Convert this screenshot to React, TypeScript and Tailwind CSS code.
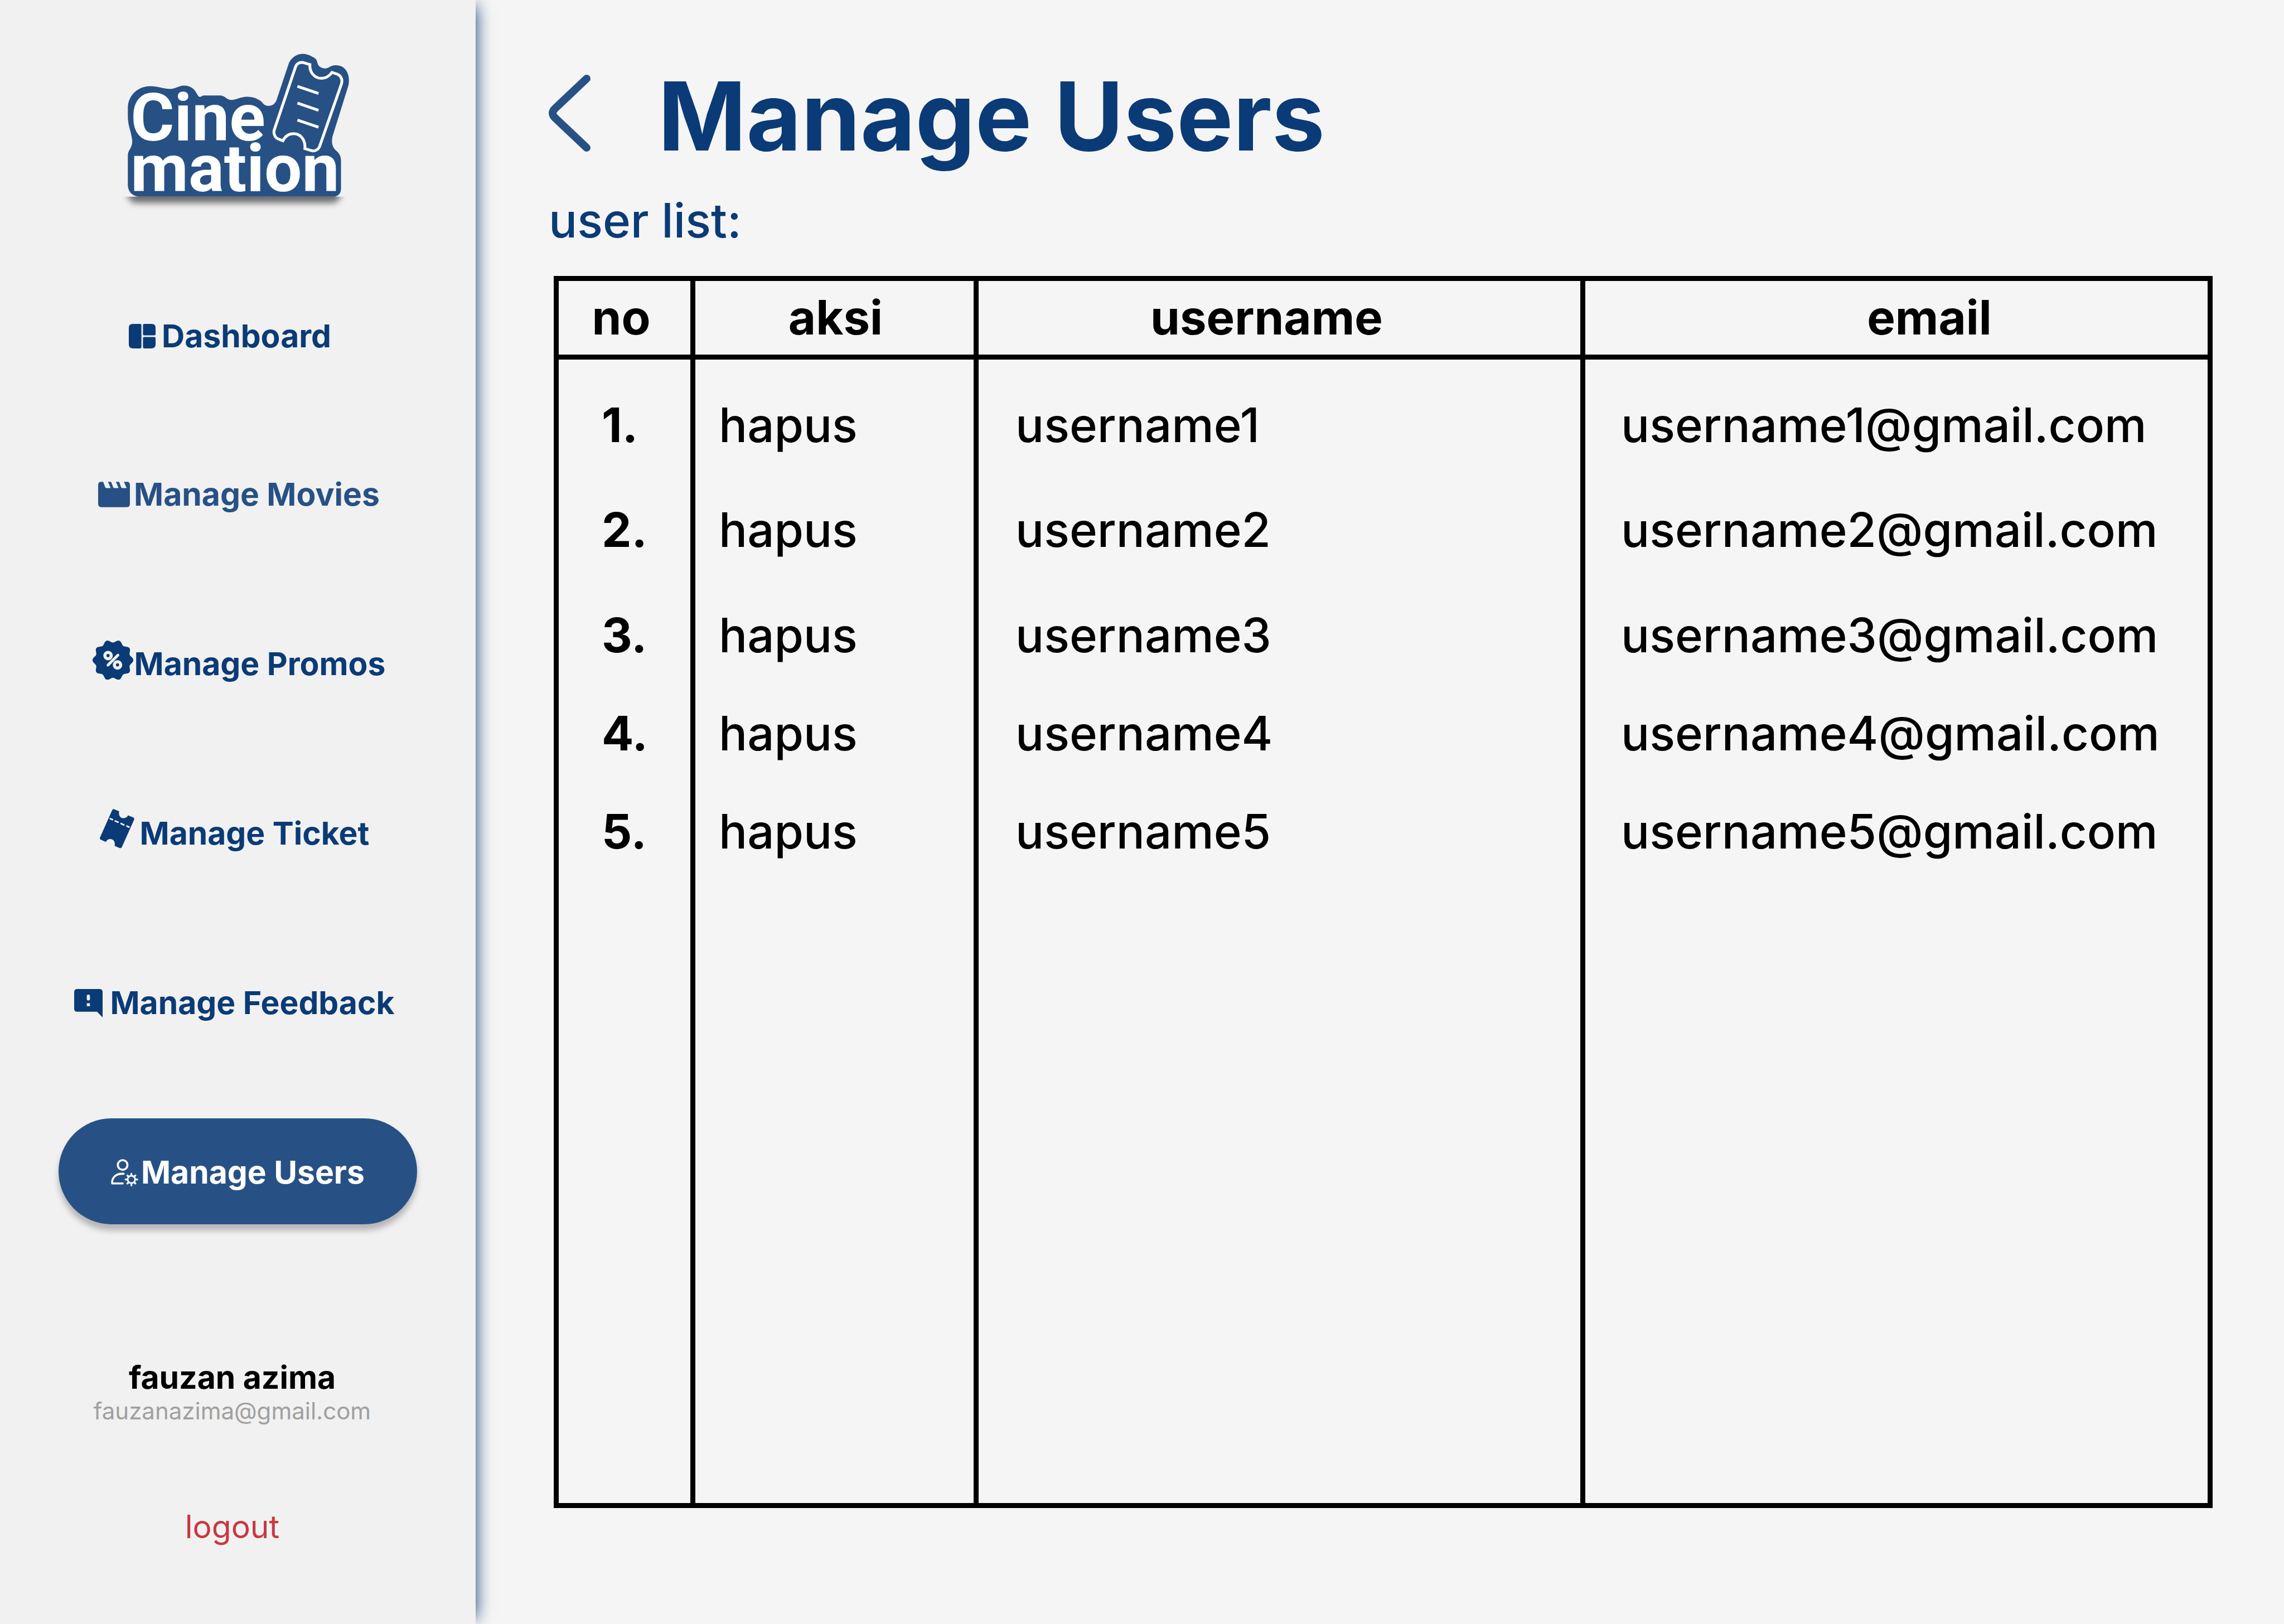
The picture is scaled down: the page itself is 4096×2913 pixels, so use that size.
import type { ReactNode } from "react";

/* ---------- icons ---------- */

function DashboardIcon() {
  return (
    <svg viewBox="0 0 68 62" className="h-[44px] w-[48px]" fill="currentColor" aria-hidden="true">
      <path d="M10 0H29Q32 0 32 3V59Q32 62 29 62H10Q0 62 0 52V10Q0 0 10 0Z" />
      <path d="M39 0H58Q68 0 68 10V26Q68 29 65 29H39Q36 29 36 26V3Q36 0 39 0Z" />
      <path d="M39 33H65Q68 33 68 36V52Q68 62 58 62H39Q36 62 36 59V36Q36 33 39 33Z" />
    </svg>
  );
}

function MovieIcon() {
  return (
    <svg viewBox="0 0 80 64" className="h-[46px] w-[57px]" fill="currentColor" aria-hidden="true">
      <path d="M8 0H12.6L18 14Q19 16 21 16H31.6L24.7 0H32.6L38 14Q39 16 41 16H51.6L44.7 0H52.8L58 14Q59 16 61 16H71.8L64.9 0H74Q80 1 80 8V56Q80 64 72 64H8Q0 64 0 56V8Q0 0 8 0Z" />
    </svg>
  );
}

const badgePath =
  Array.from({ length: 120 }, (_, i) => {
    const angle = (i / 120) * Math.PI * 2;
    const radius = 145 + 11 * Math.cos(angle * 10);
    const x = (191 + radius * Math.cos(angle)).toFixed(1);
    const y = (195 + radius * Math.sin(angle)).toFixed(1);
    return `${i === 0 ? "M" : "L"}${x} ${y}`;
  }).join("") + "Z";

function PromoIcon() {
  return (
    <svg viewBox="36 47 310 354" className="h-[84px] w-[73px]" aria-hidden="true">
      <path d={badgePath} fill="currentColor" />
      <g fill="none" stroke="#f1f1f1">
        <circle cx="154" cy="160" r="24" strokeWidth="24" />
        <circle cx="226" cy="231" r="24" strokeWidth="24" />
        <path d="M153 233L229 157" strokeWidth="21" strokeLinecap="round" />
      </g>
    </svg>
  );
}

function TicketIcon() {
  return (
    <svg viewBox="57 33 262 370" className="h-[88px] w-[62px]" aria-hidden="true">
      <path
        fill="currentColor"
        d="M165 34L204 50C196 78 212 102 236 102C252 102 264 95 271 81L310 97Q321 102 317 113L224 322Q219 332 208 329L169 312C176 284 162 260 136 260C122 260 110 267 102 282L64 265Q55 260 58 250L151 41Q156 31 165 34Z"
      />
      <path
        d="M136 106L153 113M174 124L195 132M218 143L239 153M262 162L278 169"
        stroke="#f1f1f1"
        strokeWidth="12"
        strokeLinecap="round"
      />
    </svg>
  );
}

function FeedbackIcon() {
  return (
    <svg viewBox="0 0 72 72" className="h-[51px] w-[51px]" fill="currentColor" aria-hidden="true">
      <path d="M8 0H64Q72 0 72 8V72L58 57.5H8Q0 57.5 0 50V8Q0 0 8 0Z" />
      <rect x="32" y="14" width="8" height="15" rx="4" fill="#f1f1f1" />
      <rect x="32" y="36" width="8" height="7.5" fill="#f1f1f1" />
    </svg>
  );
}

function UserCogIcon() {
  return (
    <svg
      viewBox="29 43 206 206"
      className="h-[49px] w-[49px]"
      fill="none"
      stroke="currentColor"
      strokeWidth="15"
      strokeLinecap="round"
      strokeLinejoin="round"
      aria-hidden="true"
    >
      <circle cx="117" cy="88" r="36.5" />
      <path d="M125 154H112C65 154 38 185 38 217V227H118" />
      <circle cx="183" cy="197" r="28" strokeWidth="12" />
      <path
        strokeWidth="14"
        d="M183 163V154M183 231V242M149 197H140M217 197H227M159 173L153 167M207 173L213 167M159 221L153 227M207 221L213 227"
      />
    </svg>
  );
}

function BackIcon() {
  return (
    <svg viewBox="0 0 76 148" className="h-[148px] w-[76px]" aria-hidden="true">
      <path
        d="M68 7L11 61Q3 69 11 77L68 131"
        fill="none"
        stroke="currentColor"
        strokeWidth="14"
        strokeLinecap="round"
      />
    </svg>
  );
}

function Logo() {
  return (
    <svg
      viewBox="300 120 600 420"
      className="h-[299px] w-[427px]"
      role="img"
      aria-label="Cinemation"
    >
      <defs>
        <filter id="logo-blur" x="-20%" y="-50%" width="140%" height="200%">
          <feGaussianBlur stdDeviation="8" />
        </filter>
        <clipPath id="below-logo">
          <rect x="300" y="496" width="600" height="44" />
        </clipPath>
      </defs>
      <g clipPath="url(#below-logo)">
        <rect x="323" y="440" width="536" height="72" rx="22" fill="#000" fillOpacity="0.55" filter="url(#logo-blur)" />
      </g>
      <g transform="translate(280 100) scale(0.40816 0.33333)">
        <path
          fill="#275185"
          d="M105 1105V880C105 855 112 840 120 825C131 800 132 785 132 765C130 735 122 700 118 680C108 640 105 610 105 570V520C105 425 165 353 245 353C285 353 330 374 365 374C405 374 415 349 452 349C490 349 515 375 525 398L541 430Q550 439 560 430Q565 424 572 423H670C710 423 710 457 746 457C775 457 800 433 842 433C880 433 910 450 930 470C940 485 950 502 975 502C1005 502 1020 475 1026 448L1096 190C1106 145 1145 108 1184 108C1215 108 1235 125 1254 137C1285 160 1265 190 1298 212C1315 222 1330 220 1347 210C1365 195 1385 190 1410 198C1450 208 1472 260 1470 315Q1470 335 1465 355L1368 735C1362 775 1365 810 1390 840C1410 858 1421 885 1421 915V1130Q1421 1175 1383 1188H168Q110 1175 105 1105Z"
        />
        <g fill="none" stroke="#fff" strokeWidth="5">
          <path
            vectorEffect="non-scaling-stroke"
            d="M1140 208C1148 182 1165 170 1190 175L1229 190C1226 245 1255 293 1300 294C1330 294 1350 275 1365 249L1398 262C1420 275 1432 300 1424 335L1290 805C1283 830 1265 845 1243 842L1198 825C1202 780 1185 713 1128 712C1098 712 1075 735 1062 766L1030 750C1012 740 1004 710 1008 688Z"
          />
          <path
            vectorEffect="non-scaling-stroke"
            d="M1152 354L1282 408M1152 481L1282 536M1152 609L1282 663"
          />
        </g>
      </g>
      <g fill="#fff" fontFamily="Roboto, sans-serif" fontWeight="700" fontSize="168">
        <text x="330" y="355">Cine</text>
        <text x="330" y="482">mation</text>
      </g>
    </svg>
  );
}

/* ---------- sidebar ---------- */

type NavItem = { label: string; icon: ReactNode; className: string };

const navItems: NavItem[] = [
  { label: "Dashboard", icon: <DashboardIcon />, className: "-mb-5 gap-[11px] pr-7 text-[#0a3b76]" },
  { label: "Manage Movies", icon: <MovieIcon />, className: "gap-[7px] pl-1 text-[#275185]" },
  { label: "Manage Promos", icon: <PromoIcon />, className: "gap-[2px] pl-1 text-[#0a3b76]" },
  { label: "Manage Ticket", icon: <TicketIcon />, className: "gap-[10px] pr-3 text-[#0a3b76]" },
  { label: "Manage Feedback", icon: <FeedbackIcon />, className: "gap-[13px] pr-3 text-[#0a3b76]" },
  {
    label: "Manage Users",
    icon: <UserCogIcon />,
    className: "gap-[5px] bg-[#275185] text-white shadow-[0_11px_11px_rgba(0,0,0,0.25)]",
  },
];

function Sidebar() {
  return (
    <aside className="relative flex w-[853px] shrink-0 flex-col items-center bg-[#f1f1f1] pt-[85px] shadow-[11px_0_28px_-11px_#0a3b76]">
      <Logo />
      <nav className="mt-[122px] flex w-[643px] flex-col gap-[114px]">
        {navItems.map((item) => (
          <a
            key={item.label}
            href="#"
            aria-current={item.label === "Manage Users" ? "page" : undefined}
            className={`flex h-[190px] items-center justify-center rounded-full pt-1 text-[57px] leading-[70px] font-bold whitespace-nowrap ${item.className}`}
          >
            {item.icon}
            <span>{item.label}</span>
          </a>
        ))}
      </nav>
      <div className="mt-[240px] flex flex-col items-center pr-5">
        <p className="text-[57px] leading-[70px] font-bold text-black">fauzan azima</p>
        <p className="text-[42px] leading-[50px] text-[#a0a0a0]">fauzanazima@gmail.com</p>
        <button type="button" className="mt-[148px] text-[57px] leading-[70px] text-[#c73841]">
          logout
        </button>
      </div>
    </aside>
  );
}

/* ---------- user table ---------- */

const users = [
  { no: "1.", username: "username1", email: "username1@gmail.com", height: "h-[192px]" },
  { no: "2.", username: "username2", email: "username2@gmail.com", height: "h-[189px]" },
  { no: "3.", username: "username3", email: "username3@gmail.com", height: "h-[176px]" },
  { no: "4.", username: "username4", email: "username4@gmail.com", height: "h-[176px]" },
  { no: "5.", username: "username5", email: "username5@gmail.com", height: "" },
];

function UserTable() {
  return (
    <table className="mt-[49px] ml-[9px] h-[2210px] table-fixed border-collapse border-[9px] border-black text-left text-[85px] leading-[100px] text-black">
      <colgroup>
        <col className="w-[245px]" />
        <col className="w-[508px]" />
        <col className="w-[1088px]" />
        <col />
      </colgroup>
      <thead>
        <tr className="h-[141px] border-b-[9px] border-black text-center">
          <th scope="col" className="border-r-[9px] border-black pr-3">no</th>
          <th scope="col" className="border-r-[9px] border-black pl-1">aksi</th>
          <th scope="col" className="border-r-[9px] border-black pr-[46px]">username</th>
          <th scope="col" className="pl-[118px]">email</th>
        </tr>
      </thead>
      <tbody>
        {users.map((user) => (
          <tr key={user.no} className={`align-top font-medium ${user.height}`}>
            <td className="border-r-[9px] border-black pt-[68px] pl-[77px] font-bold">{user.no}</td>
            <td className="border-r-[9px] border-black pt-[68px] pl-[42px]">
              <button type="button" className="block">hapus</button>
            </td>
            <td className="border-r-[9px] border-black pt-[68px] pl-[66px]">{user.username}</td>
            <td className="pt-[68px] pl-[64px]">{user.email}</td>
          </tr>
        ))}
      </tbody>
    </table>
  );
}

export default function App() {
  return (
    <div className="flex min-h-screen bg-[#f5f5f5] font-[Inter,sans-serif]">
      <Sidebar />
      <main className="flex min-w-0 flex-1 flex-col pt-[108px] pr-[128px] pl-[131px]">
        <header className="flex items-center gap-[120px]">
          <a href="#" aria-label="Back" className="text-[#275185]">
            <BackIcon />
          </a>
          <h1 className="text-[170px] leading-[200px] font-bold text-[#0a3b76]">Manage Users</h1>
        </header>
        <h2 className="mt-[38px] text-[85px] leading-[100px] font-medium text-[#0a3b76]">user list:</h2>
        <UserTable />
      </main>
    </div>
  );
}
